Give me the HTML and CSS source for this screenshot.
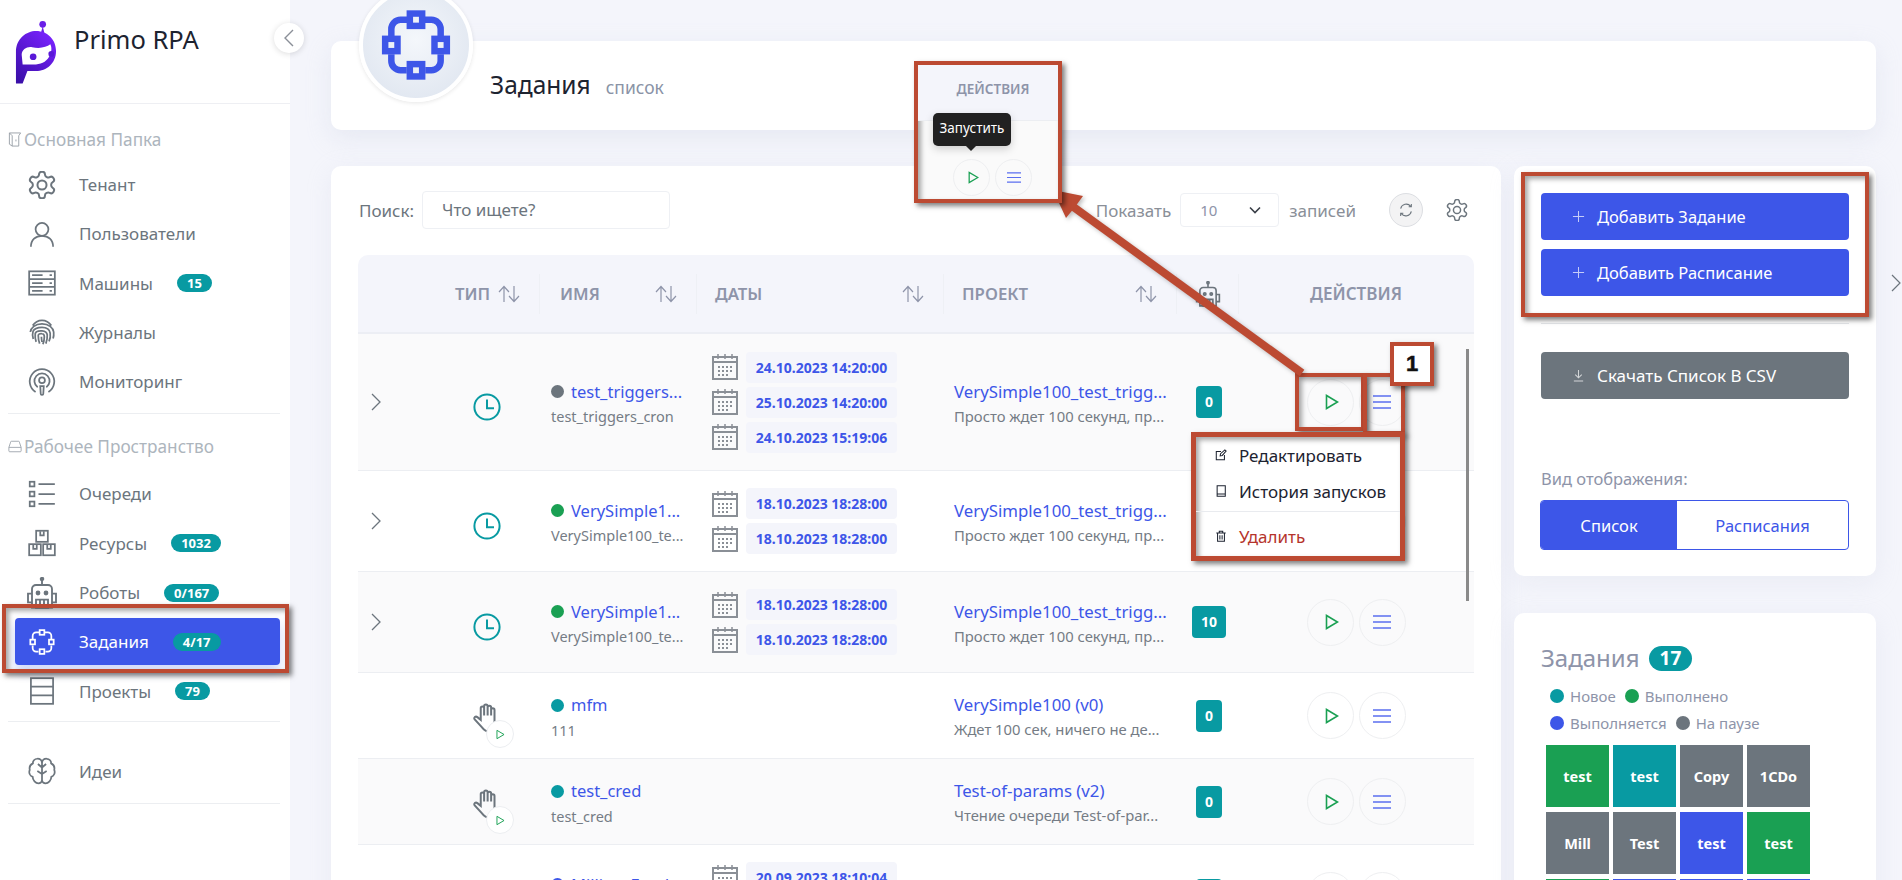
FILE: index.html
```html
<!DOCTYPE html>
<html lang="ru">
<head>
  <meta charset="UTF-8" />
  <title>Задания – Primo RPA</title>
  <link rel="stylesheet" href="styles.css">
</head>
<body>
  <svg class="icon-defs" aria-hidden="true">
    <symbol id="i-gear" viewBox="1.5 1.5 21 21"><path d="M12.22 2h-.44a2 2 0 0 0-2 2v.18a2 2 0 0 1-1 1.73l-.43.25a2 2 0 0 1-2 0l-.15-.08a2 2 0 0 0-2.73.73l-.22.38a2 2 0 0 0 .73 2.73l.15.1a2 2 0 0 1 1 1.72v.51a2 2 0 0 1-1 1.74l-.15.09a2 2 0 0 0-.73 2.73l.22.38a2 2 0 0 0 2.73.73l.15-.08a2 2 0 0 1 2 0l.43.25a2 2 0 0 1 1 1.73V20a2 2 0 0 0 2 2h.44a2 2 0 0 0 2-2v-.18a2 2 0 0 1 1-1.73l.43-.25a2 2 0 0 1 2 0l.15.08a2 2 0 0 0 2.73-.73l.22-.39a2 2 0 0 0-.73-2.73l-.15-.08a2 2 0 0 1-1-1.74v-.5a2 2 0 0 1 1-1.74l.15-.09a2 2 0 0 0 .73-2.73l-.22-.38a2 2 0 0 0-2.73-.73l-.15.08a2 2 0 0 1-2 0l-.43-.25a2 2 0 0 1-1-1.73V4a2 2 0 0 0-2-2z"/><circle cx="12" cy="12" r="3.4"/></symbol>
    <symbol id="i-user" viewBox="0 0 24 24"><circle cx="12" cy="8" r="5.5"/><path d="M2.5 23c0-6 4-9.5 9.5-9.5s9.500 3.500 9.500 9.500"/></symbol>
    <symbol id="i-server" viewBox="0 0 24 24"><rect x="1" y="2" width="22" height="20"/><path d="M1 8.700h22M1 15.300h22M3.500 5.300h9M3.500 12h9M3.500 18.700h9M18.500 5.300h2M18.500 12h2M18.500 18.700h2"/></symbol>
    <symbol id="i-finger" viewBox="0 0 24 24"><path d="M4 6.500C6 3.500 9 2 12 2s6 1.500 8 4.500M2 12c.5-3.500 4-7 10-7s9.500 3.500 10 7c.2 2 0 4-.5 5.500M4.500 18c-.7-2-.8-4.500-.2-6.500C5.500 8.500 8.500 8 12 8s6.500 1.500 7 5c.3 2 0 5-1 7M7 20.500c-.8-2-1-5-.8-7C6.500 11.500 9 10.800 12 11c2.500.2 4.300 1.200 4.500 3.500.2 2.500-.3 5-1.200 7.500M10 22c-.8-2-1.200-4.500-1.200-7 0-1.200 1.200-1.700 3.200-1.500 1.500.1 2 1 2 2.500 0 2-.4 4.300-1.200 6.500M11.500 16c0 1.500.2 3 .5 4.500"/></symbol>
    <symbol id="i-podcast" viewBox="0 0 24 24"><path d="M6.500 20.500a10.500 10.500 0 1 1 11 0M8.300 16.500a6.500 6.500 0 1 1 7.400 0"/><circle cx="12" cy="10.500" r="2.500"/><path d="M10.500 15.500h3l-.4 6.500a1 1 0 0 1-1 1h-.2a1 1 0 0 1-1-1z"/></symbol>
    <symbol id="i-list" viewBox="0 0 24 24"><rect x="1.500" y="1.500" width="4" height="4"/><rect x="1.500" y="10" width="4" height="4"/><rect x="1.500" y="18.500" width="4" height="4"/><path d="M9 3.500h14M9 12h14M9 20.500h14"/></symbol>
    <symbol id="i-boxes" viewBox="0 0 24 24"><rect x="7" y="1.500" width="10" height="9.500"/><rect x="1" y="13" width="10" height="9.500"/><rect x="13" y="13" width="10" height="9.500"/><path d="M10.500 2v3.500h3V2M4.500 13.500V17h3v-3.500M16.500 13.500V17h3v-3.500"/></symbol>
    <symbol id="i-robot" viewBox="0 0 24 24"><circle cx="12" cy="1.500" r="1" fill="currentColor"/><path d="M12 2.500V6M4.500 23V9a3 3 0 0 1 3-3h9a3 3 0 0 1 3 3v14zM4.500 12.500H1.500v6.500h3M19.500 12.500h3v6.500h-3"/><circle cx="9" cy="12" r="1.100" fill="currentColor"/><circle cx="15" cy="12" r="1.100" fill="currentColor"/><path d="M7.500 17v6h9v-6zM10.500 17v6M13.500 17v6"/></symbol>
    <symbol id="i-tasks" viewBox="0 0 24 24"><path d="M9.700 3.800H7a3 3 0 0 0-3 3V9.800M20 9.800V6.800a3 3 0 0 0-3-3h-2.700M4 15v2.200a3 3 0 0 0 3 3h2M15 20.200h2a3 3 0 0 0 3-3V15"/><rect x="10" y="1.800" width="4" height="4"/><rect x="10" y="18.200" width="4" height="4"/><rect x="2" y="10" width="4" height="4"/><rect x="18" y="10" width="4" height="4"/></symbol>
    <symbol id="i-stack" viewBox="0 0 24 24"><rect x="2.500" y="1" width="19" height="22"/><path d="M2.500 8.300h19M2.500 15.700h19"/></symbol>
    <symbol id="i-brain" viewBox="0 0 24 24"><path d="M12 5a4 4 0 0 0-4-3.500C5.500 1.500 4 3.500 4.200 5.500 2 6.500 1 8.700 1.500 11c-1 2.500 0 5 2.500 6 0 3 2.500 5.500 5 5.500 1.500 0 3-1 3-2.500 0 1.500 1.500 2.500 3 2.500 2.500 0 5-2.500 5-5.500 2.500-1 3.500-3.500 2.500-6 .5-2.300-.5-4.500-2.700-5.500.2-2-1.300-4-3.800-4A4 4 0 0 0 12 5zM12 5v15M12 9L8.500 6M12 9l3.500-3M12 14.500l-4-2.500M12 14.500l4-2.500"/></symbol>
    <symbol id="i-clock" viewBox="0 0 24 24"><circle cx="12" cy="12" r="10.800"/><path d="M12 5.500V13h6"/></symbol>
    <symbol id="i-hand" viewBox="0 0 24 24"><path d="M14 23c-2.500 0-4.500-1.500-6-3.500L2 13c-.8-1.200.8-2.800 2.300-1.700L7 13.500V4c0-1.700 2.700-1.700 2.700 0v6M9.700 10V2.500c0-1.800 2.800-1.800 2.800 0V10M12.500 10V3.500c0-1.800 2.800-1.800 2.800 0V10M15.300 10V5.500c0-1.800 2.700-1.800 2.700 0V17"/></symbol>
    <symbol id="i-play" viewBox="0 0 14 16"><path d="M1.500 1.500v13l11-6.500z"/></symbol>
    <symbol id="i-menu" viewBox="0 0 18 14"><path d="M0 1h18M0 7h18M0 13h18"/></symbol>
    <symbol id="i-sort" viewBox="0 0 22 18"><path d="M6 17V2M1 7l5-5.500L11 7M16 1v15M11 11l5 5.500 5-5.500"/></symbol>
    <symbol id="i-chevron" viewBox="0 0 10 18"><path d="M1 1l8 8-8 8"/></symbol>
    <symbol id="i-calendar" viewBox="0 0 26 26"><rect x="1" y="3" width="24" height="22" fill="none" stroke="currentColor" stroke-width="2"/><path d="M1 8h24" stroke="currentColor" stroke-width="2"/><path d="M6 0v5M13 0v5M20 0v5" stroke="currentColor" stroke-width="1.500"/><path d="M6 12h2v2H6zM10 12h2v2h-2zM14 12h2v2h-2zM18 12h2v2h-2zM6 16h2v2H6zM10 16h2v2h-2zM14 16h2v2h-2zM18 16h2v2h-2zM6 20h2v2H6zM10 20h2v2h-2zM14 20h2v2h-2z" fill="currentColor"/></symbol>
  </svg>

  <div class="app">
    <aside class="sidebar">
      <div class="brand">
        <svg class="brand-logo" viewBox="0 0 44 66">
          <defs>
            <linearGradient id="logoFill" x1="0.800" y1="0" x2="0.100" y2="1">
              <stop offset="0" stop-color="#7a22ff"/>
              <stop offset="1" stop-color="#3a0fa8"/>
            </linearGradient>
          </defs>
          <circle cx="29" cy="4" r="3.500" fill="#6a1ee8"/>
          <path d="M29 6l2 8h-4z" fill="#6a1ee8"/>
          <path d="M1 33C1 19 12 11 22 11c12 0 21 9 21 21 0 13-10 21-21 21h-9L8 66H1z" fill="url(#logoFill)"/>
          <path d="M7 36c0-6 6-9 11-8 8 2 15 0 19-3 2 4 1 8 0 11-3 6-8 10-15 10H8z" fill="#fff"/>
          <circle cx="19" cy="38" r="3.500" fill="#5a18d8"/>
          <circle cx="38" cy="35" r="3" fill="#5a18d8"/>
        </svg>
        <span class="brand-name">Primo RPA</span>
      </div>
      <button class="collapse-btn"><svg class="collapse-icon"><use href="#i-chevron"/></svg></button>

      <nav class="nav">
        <div class="nav-heading nav-heading-first">
          <svg class="nav-heading-icon" viewBox="0 0 14 16"><path d="M1 1h12l-2 3v11H4V4L1 1zM1 1v12l3 2M8 8v2"/></svg>
          Основная Папка
        </div>
        <a class="nav-item nav-item-first"><svg class="nav-icon"><use href="#i-gear"/></svg>Тенант</a>
        <a class="nav-item"><svg class="nav-icon"><use href="#i-user"/></svg>Пользователи</a>
        <a class="nav-item"><svg class="nav-icon"><use href="#i-server"/></svg>Машины<span class="badge">15</span></a>
        <a class="nav-item"><svg class="nav-icon"><use href="#i-finger"/></svg>Журналы</a>
        <a class="nav-item"><svg class="nav-icon"><use href="#i-podcast"/></svg>Мониторинг</a>
        <hr class="nav-divider" />
        <div class="nav-heading">
          <svg class="nav-heading-icon" viewBox="0 0 16 14"><path d="M1 8l2-6a1 1 0 0 1 1-1h8a1 1 0 0 1 1 1l2 6v4a1 1 0 0 1-1 1H2a1 1 0 0 1-1-1zM1 8h14"/></svg>
          Рабочее Пространство
        </div>
        <a class="nav-item nav-item-second"><svg class="nav-icon"><use href="#i-list"/></svg>Очереди</a>
        <a class="nav-item"><svg class="nav-icon"><use href="#i-boxes"/></svg>Ресурсы<span class="badge">1032</span></a>
        <a class="nav-item"><svg class="nav-icon nav-icon-big"><use href="#i-robot"/></svg>Роботы<span class="badge">0/167</span></a>
        <a class="nav-item active"><svg class="nav-icon"><use href="#i-tasks"/></svg>Задания<span class="badge">4/17</span></a>
        <a class="nav-item"><svg class="nav-icon"><use href="#i-stack"/></svg>Проекты<span class="badge">79</span></a>
        <hr class="nav-divider nav-divider-tight" />
        <a class="nav-item nav-item-solo"><svg class="nav-icon"><use href="#i-brain"/></svg>Идеи</a>
        <hr class="nav-divider" />
      </nav>
    </aside>

    <main class="content">
      <section class="page-head">
        <div class="avatar"><svg class="avatar-icon"><use href="#i-tasks"/></svg></div>
        <h1 class="page-title">Задания</h1>
        <span class="page-sub">список</span>
      </section>

      <div class="columns">
        <section class="card list-card">
          <div class="toolbar">
            <label class="search-label">Поиск:</label>
            <div class="search-input">Что ищете?</div>
            <div class="toolbar-right">
              <span class="toolbar-text">Показать</span>
              <div class="page-size">10
                <svg class="page-size-arrow" viewBox="0 0 12 8"><path d="M1 1.500l5 5 5-5"/></svg>
              </div>
              <span class="toolbar-text">записей</span>
              <button class="refresh-btn">
                <svg class="refresh-icon" viewBox="0 0 24 24"><path d="M4 10a8.500 8.500 0 0 1 15-3.500M20 14a8.500 8.500 0 0 1-15 3.500M20 3v4h-4M4 21v-4h4"/></svg>
              </button>
              <svg class="toolbar-gear"><use href="#i-gear"/></svg>
            </div>
          </div>

          <div class="table">
            <div class="table-scrollbar"></div>
            <div class="table-row table-head">
              <div></div>
              <div class="th th-type">Тип<svg class="sort"><use href="#i-sort"/></svg></div>
              <div class="th th-name">Имя<svg class="sort"><use href="#i-sort"/></svg></div>
              <div class="th">Даты<svg class="sort"><use href="#i-sort"/></svg></div>
              <div class="th">Проект<svg class="sort"><use href="#i-sort"/></svg></div>
              <div class="th th-robot"><svg class="robot-icon"><use href="#i-robot"/></svg></div>
              <div class="th th-actions">Действия</div>
            </div>

            <div class="table-row row-tall row-alt">
              <div class="cell-expand"><svg class="expand"><use href="#i-chevron"/></svg></div>
              <div class="cell-type"><svg class="clock"><use href="#i-clock"/></svg></div>
              <div class="cell-name">
                <div class="name-line"><span class="dot dot-grey"></span><a class="link">test_triggers...</a></div>
                <div class="sub">test_triggers_cron</div>
              </div>
              <div class="cell-dates">
                <div class="date-line"><svg class="calendar"><use href="#i-calendar"/></svg><span class="date">24.10.2023 14:20:00</span></div>
                <div class="date-line"><svg class="calendar"><use href="#i-calendar"/></svg><span class="date">25.10.2023 14:20:00</span></div>
                <div class="date-line"><svg class="calendar"><use href="#i-calendar"/></svg><span class="date">24.10.2023 15:19:06</span></div>
              </div>
              <div class="cell-project">
                <a class="link">VerySimple100_test_trigg...</a>
                <div class="sub">Просто ждет 100 секунд, пр...</div>
              </div>
              <div class="cell-count"><span class="count">0</span></div>
              <div class="cell-actions">
                <button class="round-btn"><svg class="play"><use href="#i-play"/></svg></button>
                <button class="round-btn"><svg class="menu"><use href="#i-menu"/></svg></button>
              </div>
            </div>

            <div class="table-row row-mid">
              <div class="cell-expand"><svg class="expand"><use href="#i-chevron"/></svg></div>
              <div class="cell-type"><svg class="clock"><use href="#i-clock"/></svg></div>
              <div class="cell-name">
                <div class="name-line"><span class="dot dot-green"></span><a class="link">VerySimple1...</a></div>
                <div class="sub">VerySimple100_te...</div>
              </div>
              <div class="cell-dates">
                <div class="date-line"><svg class="calendar"><use href="#i-calendar"/></svg><span class="date">18.10.2023 18:28:00</span></div>
                <div class="date-line"><svg class="calendar"><use href="#i-calendar"/></svg><span class="date">18.10.2023 18:28:00</span></div>
              </div>
              <div class="cell-project">
                <a class="link">VerySimple100_test_trigg...</a>
                <div class="sub">Просто ждет 100 секунд, пр...</div>
              </div>
              <div class="cell-count"><span class="count">0</span></div>
              <div class="cell-actions">
                <button class="round-btn"><svg class="play"><use href="#i-play"/></svg></button>
                <button class="round-btn"><svg class="menu"><use href="#i-menu"/></svg></button>
              </div>
            </div>

            <div class="table-row row-mid row-alt">
              <div class="cell-expand"><svg class="expand"><use href="#i-chevron"/></svg></div>
              <div class="cell-type"><svg class="clock"><use href="#i-clock"/></svg></div>
              <div class="cell-name">
                <div class="name-line"><span class="dot dot-green"></span><a class="link">VerySimple1...</a></div>
                <div class="sub">VerySimple100_te...</div>
              </div>
              <div class="cell-dates">
                <div class="date-line"><svg class="calendar"><use href="#i-calendar"/></svg><span class="date">18.10.2023 18:28:00</span></div>
                <div class="date-line"><svg class="calendar"><use href="#i-calendar"/></svg><span class="date">18.10.2023 18:28:00</span></div>
              </div>
              <div class="cell-project">
                <a class="link">VerySimple100_test_trigg...</a>
                <div class="sub">Просто ждет 100 секунд, пр...</div>
              </div>
              <div class="cell-count"><span class="count count-wide">10</span></div>
              <div class="cell-actions">
                <button class="round-btn"><svg class="play"><use href="#i-play"/></svg></button>
                <button class="round-btn"><svg class="menu"><use href="#i-menu"/></svg></button>
              </div>
            </div>

            <div class="table-row row-low">
              <div></div>
              <div class="cell-type"><span class="hand-wrap"><svg class="hand"><use href="#i-hand"/></svg><span class="hand-play"><svg class="play-small"><use href="#i-play"/></svg></span></span></div>
              <div class="cell-name">
                <div class="name-line"><span class="dot dot-teal"></span><a class="link">mfm</a></div>
                <div class="sub">111</div>
              </div>
              <div></div>
              <div class="cell-project">
                <a class="link">VerySimple100 (v0)</a>
                <div class="sub">Ждет 100 сек, ничего не де...</div>
              </div>
              <div class="cell-count"><span class="count">0</span></div>
              <div class="cell-actions">
                <button class="round-btn"><svg class="play"><use href="#i-play"/></svg></button>
                <button class="round-btn"><svg class="menu"><use href="#i-menu"/></svg></button>
              </div>
            </div>

            <div class="table-row row-low row-alt">
              <div></div>
              <div class="cell-type"><span class="hand-wrap"><svg class="hand"><use href="#i-hand"/></svg><span class="hand-play"><svg class="play-small"><use href="#i-play"/></svg></span></span></div>
              <div class="cell-name">
                <div class="name-line"><span class="dot dot-teal"></span><a class="link">test_cred</a></div>
                <div class="sub">test_cred</div>
              </div>
              <div></div>
              <div class="cell-project">
                <a class="link">Test-of-params (v2)</a>
                <div class="sub">Чтение очереди Test-of-par...</div>
              </div>
              <div class="cell-count"><span class="count">0</span></div>
              <div class="cell-actions">
                <button class="round-btn"><svg class="play"><use href="#i-play"/></svg></button>
                <button class="round-btn"><svg class="menu"><use href="#i-menu"/></svg></button>
              </div>
            </div>

            <div class="table-row row-mid">
              <div></div>
              <div class="cell-type"></div>
              <div class="cell-name">
                <div class="name-line"><span class="dot dot-blue"></span><a class="link">Million_Food...</a></div>
                <div class="sub">Million_Food</div>
              </div>
              <div class="cell-dates">
                <div class="date-line"><svg class="calendar"><use href="#i-calendar"/></svg><span class="date">20.09.2023 18:10:04</span></div>
                <div class="date-line"></div>
              </div>
              <div></div>
              <div class="cell-count"><span class="count"></span></div>
              <div class="cell-actions">
                <button class="round-btn"><svg class="play"><use href="#i-play"/></svg></button>
                <button class="round-btn"><svg class="menu"><use href="#i-menu"/></svg></button>
              </div>
            </div>
          </div>
        </section>

        <div class="side-column">
          <section class="card actions-card">
            <button class="wide-btn wide-btn-blue"><svg class="btn-icon" viewBox="0 0 14 14"><path d="M7 1v12M1 7h12"/></svg>Добавить Задание</button>
            <button class="wide-btn wide-btn-blue"><svg class="btn-icon" viewBox="0 0 14 14"><path d="M7 1v12M1 7h12"/></svg>Добавить Расписание</button>
            <hr class="side-divider" />
            <button class="wide-btn wide-btn-grey"><svg class="btn-icon" viewBox="0 0 14 14"><path d="M7 1v8M3.500 6L7 9.500 10.500 6M2 13h10"/></svg>Скачать Список В CSV</button>
            <div class="view-label">Вид отображения:</div>
            <div class="view-toggle">
              <span class="view-option view-option-on">Список</span>
              <span class="view-option">Расписания</span>
            </div>
          </section>

          <section class="card summary-card">
            <h3 class="summary-title">Задания <span class="summary-badge">17</span></h3>
            <div class="legend">
              <span class="legend-item"><span class="legend-dot dot-teal"></span>Новое</span>
              <span class="legend-item"><span class="legend-dot dot-green"></span>Выполнено</span>
            </div>
            <div class="legend">
              <span class="legend-item"><span class="legend-dot dot-blue"></span>Выполняется</span>
              <span class="legend-item"><span class="legend-dot dot-grey"></span>На паузе</span>
            </div>
            <div class="tiles">
              <div class="tile dot-green">test</div>
              <div class="tile dot-teal">test</div>
              <div class="tile dot-grey">Copy</div>
              <div class="tile dot-grey">1CDo</div>
              <div class="tile dot-grey">Mill</div>
              <div class="tile dot-grey">Test</div>
              <div class="tile dot-blue">test</div>
              <div class="tile dot-green">test</div>
              <div class="tile dot-green"></div>
              <div class="tile dot-blue"></div>
              <div class="tile dot-blue"></div>
              <div class="tile dot-blue"></div>
            </div>
          </section>
        </div>
      </div>
    </main>
  </div>

  <svg class="side-chevron"><use href="#i-chevron"/></svg>

  <!-- red annotation marks drawn over the screenshot -->
  <div class="mark mark-sidebar"></div>
  <div class="mark mark-buttons"></div>
  <div class="mark mark-play"></div>
  <div class="mark mark-menu"></div>

  <svg class="arrow" viewBox="0 0 1902 880">
    <path d="M1302 373L1068 203" stroke="#bc4a32" stroke-width="8" fill="none"/>
    <path d="M1053 190L1083 196 1075 207 1066 218z" fill="#bc4a32"/>
  </svg>

  <div class="mark mark-preview">
    <div class="preview-head">Действия</div>
    <div class="preview-body">
      <div class="tooltip">Запустить</div>
      <div class="preview-btns">
        <button class="round-btn round-btn-small"><svg class="play play-mini"><use href="#i-play"/></svg></button>
        <button class="round-btn round-btn-small"><svg class="menu menu-mini"><use href="#i-menu"/></svg></button>
      </div>
    </div>
  </div>

  <div class="mark mark-number">1</div>

  <div class="mark mark-dropdown">
    <a class="drop-item">
      <svg class="drop-icon" viewBox="0 0 14 14"><path d="M11 7v5.500H1.500V3H7M6 8l.5-2.500L11.500 1 13 2.500 8.500 7.500z"/></svg>Редактировать
    </a>
    <a class="drop-item">
      <svg class="drop-icon" viewBox="0 0 14 14"><path d="M2.500 1h9.500v12H2.500zM2.500 10.500h9.500"/></svg>История запусков
    </a>
    <hr class="drop-divider" />
    <a class="drop-item drop-item-danger">
      <svg class="drop-icon drop-icon-dark" viewBox="0 0 14 14"><path d="M1.500 3.500h11M5 3.500V1.500h4v2M3 3.500v9.500h8V3.500M5.700 6v5M8.300 6v5"/></svg>Удалить
    </a>
  </div>
</body>
</html>
```

FILE: styles.css
```css
* { box-sizing: border-box; }
html, body { margin: 0; height: 880px; overflow: hidden; }
body { font-family: "Noto Sans", sans-serif; background-color: #f4f5fb; color: #6c757d; position: relative; }
button { font-family: inherit; }
a { text-decoration: none; }
.icon-defs { display: none; }
.app { display: flex; height: 880px; }

/* Sidebar */
.sidebar { width: 290px; flex: none; background: white; position: relative; }
.brand { height: 104px; border-bottom: 1px solid #eeeff3; display: flex; align-items: flex-start; padding: 20px 0 0 15px; }
.brand-logo { width: 42px; height: 64px; }
.brand-name { font-size: 25.5px; line-height: 38px; color: #1d2330; margin-left: 17px; }
.collapse-btn { position: absolute; left: 274px; top: 23px; width: 30px; height: 30px; border-radius: 50%; border: none; background: white; box-shadow: 0 1px 6px rgba(0,0,0,0.14); display: flex; align-items: center; justify-content: center; padding: 0; z-index: 2; }
.collapse-icon { width: 10px; height: 18px; fill: none; stroke: #8a8f98; stroke-width: 1.4; transform: scaleX(-1); }
.nav { display: flex; flex-direction: column; }
.nav-heading { height: 26px; margin-top: 19.5px; padding-left: 8px; display: flex; align-items: center; gap: 2px; font-size: 17.2px; color: #adb5bd; white-space: nowrap; }
.nav-heading-first { margin-top: 22.5px; }
.nav-heading-icon { width: 14px; height: 15px; fill: none; stroke: #9aa1a9; stroke-width: 1; }
.nav-item { height: 47px; margin: 0 10px 2.3px 15px; padding-left: 13px; display: flex; align-items: center; font-size: 17px; color: #6c757d; border-radius: 4px; }
.nav-item-first { margin-top: 8.5px; }
.nav-item-second { margin-top: 10.5px; }
.nav-item-solo { margin-top: 26px; }
.nav-icon { width: 28px; height: 28px; flex: none; margin-right: 23px; fill: none; stroke: #6c757d; stroke-width: 1.5; }
.nav-icon-big { width: 32px; height: 32px; margin: 0 21px 0 -2px; stroke-width: 1.4; }
.nav-item.active { background-color: #3d56e8; color: white; box-shadow: 0 6px 12px rgba(61,86,232,0.25); }
.nav-item.active .nav-icon { stroke: white; }
.nav-divider { margin: 6px 10px 0 8px; border: none; border-top: 1px solid #eceef1; }
.nav-divider-tight { margin-top: 4px; }
.badge { margin-left: 24px; height: 18px; line-height: 18px; padding: 0 10px; border-radius: 9px; background-color: #089aa2; color: white; font-size: 13px; font-weight: 700; }

/* Main */
.content { flex: 1; padding: 41px 26px 0 41px; min-width: 0; }
.card { background: white; border-radius: 10px; box-shadow: 0 6px 24px rgba(200,205,225,0.22); }
.page-head { height: 89px; background: white; border-radius: 10px; box-shadow: 0 8px 24px rgba(200,205,225,0.3); position: relative; display: flex; align-items: baseline; padding: 27px 0 0 159px; }
.avatar { position: absolute; left: 28px; top: -53px; width: 114px; height: 114px; border-radius: 50%; border: 4px solid white; background: radial-gradient(circle at 50% 45%, #f4f7fb, #dce3ee); box-shadow: 0 1px 4px rgba(0,0,0,0.1); display: flex; align-items: center; justify-content: center; }
.avatar-icon { width: 74px; height: 74px; fill: none; stroke: #3d56e8; stroke-width: 2.1; }
.page-title { margin: 0; font-size: 24.5px; font-weight: 400; color: #1d2330; }
.page-sub { margin-left: 15px; font-size: 17.5px; color: #8a93a6; }
.columns { display: flex; gap: 13px; margin-top: 36px; }

/* List card */
.list-card { width: 1170px; height: 760px; padding: 25px 27px 0 27px; }
.toolbar { display: flex; align-items: center; height: 38px; margin-left: 1px; }
.search-label { font-size: 17px; color: #6c757d; margin-right: 8px; }
.search-input { width: 248px; height: 38px; border: 1px solid #eef0f4; border-radius: 4px; padding-left: 19px; line-height: 36px; font-size: 17px; color: #6c757d; }
.toolbar-right { margin-left: auto; display: flex; align-items: center; padding-right: 0; }
.toolbar-text { font-size: 17px; color: #8a8f98; }
.page-size { width: 99px; height: 34px; margin: 0 10px 0 9px; border: 1px solid #eef0f4; border-radius: 4px; display: flex; align-items: center; justify-content: space-between; padding: 0 17px 0 19px; font-size: 15px; color: #8e94a9; }
.page-size-arrow { width: 12px; height: 8px; fill: none; stroke: #3a3f48; stroke-width: 1.6; }
.refresh-btn { width: 34px; height: 34px; margin-left: 33px; border-radius: 50%; border: 1px solid #dcdee2; background: #f3f3f4; display: flex; align-items: center; justify-content: center; padding: 0; }
.refresh-icon { width: 16px; height: 16px; fill: none; stroke: #6c757d; stroke-width: 1.6; }
.toolbar-gear { width: 22px; height: 22px; margin: 0 6px 0 23px; fill: none; stroke: #6c757d; stroke-width: 1.4; }

.table { margin-top: 26px; position: relative; }
.table-scrollbar { position: absolute; left: 1108px; top: 94px; width: 3px; height: 252px; background-color: #8a8a8a; z-index: 1; }
.table-row { display: grid; grid-template-columns: 82px 100px 157px 247px 233px 62px 234px; align-items: center; border-bottom: 1px solid #eceef2; }
.table-head { height: 79px; background-color: #f4f5fb; border-radius: 10px 10px 0 0; border-bottom: 2px solid #eceef4; }
.row-tall { height: 137px; }
.row-mid { height: 101px; }
.row-low { height: 86px; }
.row-alt { background-color: #fafafb; }
.th { height: 40px; display: flex; align-items: center; justify-content: space-between; padding: 0 19px 0 18px; border-right: 1px solid #eef0f5; font-size: 16.8px; font-weight: 600; color: #8e94a9; text-transform: uppercase; }
.th-type { padding-left: 15px; }
.th-name { padding-left: 20px; }
.th-robot { justify-content: center; padding: 0; }
.th-actions { justify-content: center; border-right: none; padding: 0; font-size: 17px; }
.sort { width: 22px; height: 18px; fill: none; stroke: #8e94a9; stroke-width: 1.2; }
.robot-icon { width: 26px; height: 26px; fill: none; stroke: #6c757d; stroke-width: 1.5; }

.cell-expand { padding-left: 13px; display: flex; align-items: center; }
.expand { width: 10px; height: 18px; fill: none; stroke: #6c757d; stroke-width: 1.3; }
.cell-type { display: flex; justify-content: center; padding: 9px 6px 0 0; }
.clock { width: 28px; height: 28px; fill: none; stroke: #089aa2; stroke-width: 1.7; }
.hand-wrap { position: relative; display: block; width: 30px; height: 34px; margin-top: -4px; }
.hand { width: 30px; height: 34px; fill: none; stroke: #6c757d; stroke-width: 1.6; }
.hand-play { position: absolute; left: 14px; top: 19px; width: 28px; height: 28px; border-radius: 50%; background: white; border: 1px solid #eceef1; display: flex; align-items: center; justify-content: center; }
.play-small { width: 9px; height: 11px; fill: none; stroke: #1aa053; stroke-width: 1.5; }
.cell-name { padding-left: 11px; padding-top: 3.5px; }
.name-line { display: flex; align-items: center; gap: 7px; }
.link { font-size: 16.5px; line-height: 24px; color: #3d56e8; white-space: nowrap; }
.sub { font-size: 14.5px; line-height: 24px; margin-top: 0.5px; color: #757c85; white-space: nowrap; }
.dot { width: 13px; height: 13px; border-radius: 50%; flex: none; }
.dot-grey { background-color: #6c757d; }
.dot-green { background-color: #1aa053; }
.dot-teal { background-color: #089aa2; }
.dot-blue { background-color: #3d56e8; }
.cell-dates { padding-left: 15px; display: flex; flex-direction: column; gap: 4px; }
.date-line { display: flex; align-items: center; gap: 8px; min-height: 31px; }
.calendar { width: 26px; height: 26px; color: #8a8f96; }
.date { width: 151px; height: 31px; line-height: 31px; border-radius: 4px; background-color: #f4f5fb; color: #3d56e8; font-size: 14px; font-weight: 700; text-align: center; white-space: nowrap; }
.cell-project { padding-left: 10px; padding-top: 3px; }
.cell-project .link { font-size: 16.8px; }
.cell-project .sub { font-size: 14.8px; margin-top: 0; }
.cell-count { display: flex; justify-content: center; padding-left: 2px; }
.count { min-width: 26px; height: 32px; line-height: 32px; padding: 0 5px; border-radius: 4px; background-color: #089aa2; color: white; font-size: 14px; font-weight: 700; text-align: center; }
.count-wide { min-width: 34px; }
.cell-actions { display: flex; justify-content: center; gap: 5px; }
.round-btn { width: 47px; height: 47px; border-radius: 50%; border: 1px solid #eeeff1; background: transparent; padding: 0; display: flex; align-items: center; justify-content: center; }
.round-btn-small { width: 37px; height: 37px; }
.play { width: 14px; height: 16px; fill: none; stroke: #1aa053; stroke-width: 1.6; margin-left: 3px; }
.menu { width: 18px; height: 14px; fill: none; stroke: #5b6ff0; stroke-width: 1.5; }
.play-mini { width: 11px; height: 13px; }
.menu-mini { width: 14px; height: 11px; }

/* Right column */
.side-column { width: 362px; display: flex; flex-direction: column; gap: 37px; }
.actions-card { height: 410px; padding: 27px 27px 0 27px; }
.wide-btn { width: 308px; height: 47px; border: none; border-radius: 4px; display: flex; align-items: center; padding: 0 0 0 31px; font-size: 16.5px; color: white; }
.wide-btn-blue { background-color: #3d56e8; margin-bottom: 9px; }
.wide-btn-grey { background-color: #6c757d; font-size: 17px; }
.btn-icon { width: 13px; height: 13px; margin-right: 12px; fill: none; stroke: rgba(255,255,255,0.7); stroke-width: 1.1; }
.side-divider { margin: 27px 0 28px 0; border: none; border-top: 1px solid #e4e6ea; }
.view-label { margin-top: 69px; font-size: 16.5px; line-height: 22px; color: #8e94a9; }
.view-toggle { margin-top: 10px; margin-left: -1px; width: 309px; height: 50px; display: flex; border: 1px solid #3d56e8; border-radius: 4px; overflow: hidden; }
.view-option { flex: 1; display: flex; align-items: center; justify-content: center; font-size: 16.5px; color: #3d56e8; }
.view-option-on { flex: none; width: 136px; background-color: #3d56e8; color: white; }
.summary-card { flex: 1; padding: 28px 27px 0 27px; min-height: 300px; border-radius: 10px 10px 0 0; }
.summary-title { margin: 0; display: flex; align-items: center; gap: 9px; font-size: 24px; line-height: 34px; font-weight: 400; color: #8e94a9; }
.summary-badge { height: 25px; line-height: 25px; padding: 0 11px; border-radius: 13px; background-color: #089aa2; color: white; font-size: 19px; font-weight: 700; }
.legend { margin: 11px 0 0 9px; height: 20px; display: flex; gap: 9px; }
.legend + .legend { margin-top: 7px; }
.legend-item { display: flex; align-items: center; gap: 6px; font-size: 15px; color: #8e94a9; }
.legend-dot { width: 14px; height: 14px; border-radius: 50%; }
.tiles { margin: 12px 0 0 5px; width: 263px; display: grid; grid-template-columns: repeat(4, 63px); grid-auto-rows: 62px; gap: 5px 4px; }
.tile { display: flex; align-items: center; justify-content: center; color: white; font-size: 14.5px; font-weight: 700; }

.side-chevron { position: absolute; left: 1891px; top: 274px; width: 10px; height: 18px; fill: none; stroke: #6c757d; stroke-width: 1.2; }

/* Annotations laid over the screenshot */
.mark { position: absolute; border: 4px solid #bc4a32; box-shadow: 3px 3px 5px rgba(0,0,0,0.5), inset 3px 3px 5px rgba(0,0,0,0.35); z-index: 5; }
.mark-sidebar { left: 2px; top: 604px; width: 287px; height: 69px; }
.mark-buttons { left: 1521px; top: 172px; width: 348px; height: 145px; }
.mark-play { left: 1295px; top: 373px; width: 70px; height: 58px; }
.mark-menu { left: 1363px; top: 373px; width: 42px; height: 62px; }
.arrow { position: absolute; left: 0; top: 0; width: 1902px; height: 880px; z-index: 6; filter: drop-shadow(2px 2px 2px rgba(0,0,0,0.25)); }
.mark-preview { left: 914px; top: 61px; width: 148px; height: 142px; z-index: 7; background: #fafafa; overflow: visible; }
.preview-head { height: 56px; padding-left: 10px; background-color: #f4f5fb; border-bottom: 1px solid #eceef2; text-align: center; line-height: 49px; font-size: 13.500px; font-weight: 600; color: #8e94a9; text-transform: uppercase; }
.preview-body { position: relative; }
.tooltip { position: absolute; left: 15px; top: -8px; width: 78px; height: 33px; line-height: 31px; border-radius: 5px; background-color: #212121; color: white; font-size: 13.500px; text-align: center; box-shadow: 0 3px 8px rgba(0,0,0,0.18); }
.tooltip::after { content: ""; position: absolute; left: 33px; top: 33px; border: 5px solid transparent; border-top-color: #212121; border-bottom: none; }
.preview-btns { position: absolute; left: 35px; top: 38px; display: flex; gap: 5px; }
.mark-number { left: 1390px; top: 342px; width: 44px; height: 44px; background: white; color: #111; font-family: "Liberation Sans", sans-serif; font-size: 22px; font-weight: 700; line-height: 36px; text-align: center; z-index: 8; box-shadow: 3px 3px 5px rgba(0,0,0,0.5); -webkit-text-stroke: 0.5px #111; }
.mark-dropdown { left: 1191px; top: 432px; width: 214px; height: 129px; background: white; padding: 0; z-index: 7; border-width: 5px; }
.drop-item { height: 36px; padding-left: 19px; display: flex; align-items: center; font-size: 17px; color: #1d2330; white-space: nowrap; }
.drop-divider { margin: 2px 0 6px 0; border: none; border-top: 1px solid #e9ebef; }
.drop-item-danger { color: #b5342c; }
.drop-icon { width: 12px; height: 12px; flex: none; margin-right: 12px; fill: none; stroke: #1d2330; stroke-width: 1.2; }
```
